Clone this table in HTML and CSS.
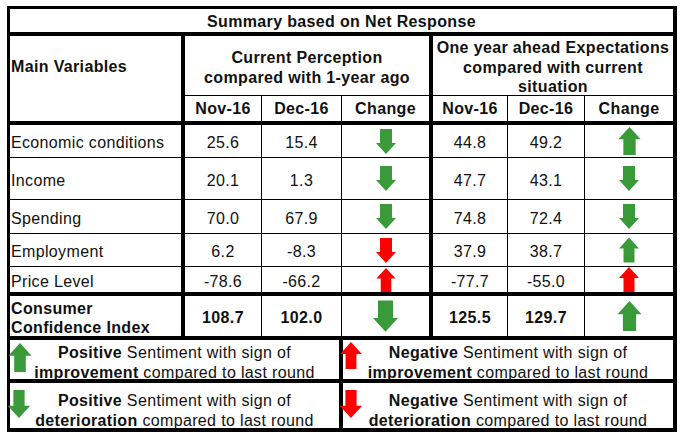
FILE: index.html
```html
<!DOCTYPE html>
<html>
<head>
<meta charset="utf-8">
<link rel="stylesheet" href="styles.css">
</head>
<body>
<div class="frame">
  <div class="table">
    <div class="cell title">Summary based on Net Response</div>
    <div class="sep"></div>
    <div class="cell mainvar">Main Variables</div>
    <div class="cell group tl">Current Perception<br>compared with 1-year ago</div>
    <div class="cell group tl">One year ahead Expectations<br>compared with current<br>situation</div>
    <div class="cell sub tl">Nov-16</div>
    <div class="cell sub">Dec-16</div>
    <div class="cell sub">Change</div>
    <div class="cell sub tl">Nov-16</div>
    <div class="cell sub">Dec-16</div>
    <div class="cell sub">Change</div>
    <div class="sep"></div>

    <div class="cell label">Economic conditions</div>
    <div class="cell tl">25.6</div>
    <div class="cell">15.4</div>
    <div class="cell ac"><svg class="arr g" width="20" height="25" viewBox="0 0 20 25"><path d="M4 0H16V14H20L10 25L0 14H4Z"/></svg></div>
    <div class="cell tl">44.8</div>
    <div class="cell">49.2</div>
    <div class="cell ac"><svg class="arr g" width="23" height="28" viewBox="0 0 20 25"><path d="M10 0L20 11H15.5V25H4.5V11H0Z"/></svg></div>

    <div class="cell label">Income</div>
    <div class="cell tl">20.1</div>
    <div class="cell">1.3</div>
    <div class="cell ac"><svg class="arr g" width="20" height="25" viewBox="0 0 20 25"><path d="M4 0H16V14H20L10 25L0 14H4Z"/></svg></div>
    <div class="cell tl">47.7</div>
    <div class="cell">43.1</div>
    <div class="cell ac"><svg class="arr g" width="20" height="25" viewBox="0 0 20 25"><path d="M4 0H16V14H20L10 25L0 14H4Z"/></svg></div>

    <div class="cell label">Spending</div>
    <div class="cell tl">70.0</div>
    <div class="cell">67.9</div>
    <div class="cell ac"><svg class="arr g" width="20" height="25" viewBox="0 0 20 25"><path d="M4 0H16V14H20L10 25L0 14H4Z"/></svg></div>
    <div class="cell tl">74.8</div>
    <div class="cell">72.4</div>
    <div class="cell ac"><svg class="arr g" width="20" height="25" viewBox="0 0 20 25"><path d="M4 0H16V14H20L10 25L0 14H4Z"/></svg></div>

    <div class="cell label">Employment</div>
    <div class="cell tl">6.2</div>
    <div class="cell">-8.3</div>
    <div class="cell ac"><svg class="arr r" width="20" height="25" viewBox="0 0 20 25"><path d="M4 0H16V14H20L10 25L0 14H4Z"/></svg></div>
    <div class="cell tl">37.9</div>
    <div class="cell">38.7</div>
    <div class="cell ac"><svg class="arr g" width="20" height="26" viewBox="0 0 20 25"><path d="M10 0L20 11H15.5V25H4.5V11H0Z"/></svg></div>

    <div class="cell label">Price Level</div>
    <div class="cell tl">-78.6</div>
    <div class="cell">-66.2</div>
    <div class="cell ac"><svg class="arr r" width="20" height="24" viewBox="0 0 20 25"><path d="M10 0L20 11H15.5V25H4.5V11H0Z"/></svg></div>
    <div class="cell tl">-77.7</div>
    <div class="cell">-55.0</div>
    <div class="cell ac"><svg class="arr r" width="20" height="25" viewBox="0 0 20 25"><path d="M10 0L20 11H15.5V25H4.5V11H0Z"/></svg></div>
    <div class="sep"></div>

    <div class="cell label cci">Consumer<br>Confidence Index</div>
    <div class="cell tl b">108.7</div>
    <div class="cell b">102.0</div>
    <div class="cell ac"><svg class="arr g" width="25" height="32" viewBox="0 0 20 25"><path d="M4 0H16V14H20L10 25L0 14H4Z"/></svg></div>
    <div class="cell tl b">125.5</div>
    <div class="cell b">129.7</div>
    <div class="cell ac"><svg class="arr g" width="25" height="30" viewBox="0 0 20 25"><path d="M10 0L20 11H15.5V25H4.5V11H0Z"/></svg></div>
  </div>

  <div class="legend">
    <div class="lg lg-1">
      <svg class="arr g larr larr-1" width="24" height="29" viewBox="0 0 20 25"><path d="M10 0L20 11H15V25H5V11H0Z"/></svg>
      <b>Positive</b> Sentiment with sign of<br><b>improvement</b> compared to last round
    </div>
    <div class="lg lg-1">
      <svg class="arr r larr larr-1r" width="24" height="27" viewBox="0 0 20 25"><path d="M10 0L20 11H15V25H5V11H0Z"/></svg>
      <b>Negative</b> Sentiment with sign of<br><b>improvement</b> compared to last round
    </div>
    <div class="lg lg-2">
      <svg class="arr g larr larr-2" width="24" height="28" viewBox="0 0 20 25"><path d="M5 0H15V14H20L10 25L0 14H5Z"/></svg>
      <b>Positive</b> Sentiment with sign of<br><b>deterioration</b> compared to last round
    </div>
    <div class="lg lg-2">
      <svg class="arr r larr larr-2r" width="24" height="28" viewBox="0 0 20 25"><path d="M5 0H15V14H20L10 25L0 14H5Z"/></svg>
      <b>Negative</b> Sentiment with sign of<br><b>deterioration</b> compared to last round
    </div>
  </div>
</div>
</body>
</html>
```

FILE: styles.css
```css
* { box-sizing: border-box; }
html, body { margin: 0; padding: 0; background: #fff; }
body {
  font-family: "Liberation Sans", Arial, sans-serif;
  font-size: 16px;
  letter-spacing: 0.35px;
  color: #111;
}
.frame {
  margin: 6px 0 0 7px;
  width: 670px;
  border-style: solid;
  border-color: #000;
  border-width: 3px 4px 4px 3px;
}
.table {
  display: grid;
  grid-template-columns: 171px 79px 79px 87px 77px 76px 88px;
  grid-template-rows: 23px 2px 59px 25px 2px 32px 41px 33px 32px 25px 2px 40px;
  gap: 1px;
  background: #000;
}
.cell {
  background: #fff;
  display: flex;
  align-items: center;
  justify-content: center;
  text-align: center;
  padding-top: 4px;
}
.cell.ac { padding-top: 0; }
.sep { grid-column: 1 / -1; background: #000; }
.title { grid-column: 1 / -1; font-weight: bold; padding-top: 3px; }
.mainvar {
  grid-row: span 2;
  align-items: flex-start;
  justify-content: flex-start;
  padding: 22px 0 0 1px;
  font-weight: bold;
}
.group { grid-column: span 3; font-weight: bold; line-height: 19.5px; }
.tl { border-left: 3px solid #000; }
.sub { font-weight: bold; padding-top: 1px; }
.b { font-weight: bold; }
.label { justify-content: flex-start; text-align: left; padding-left: 1px; }
.cci { font-weight: bold; line-height: 19px; }
.arr { display: block; }
.arr.g { fill: #3a9a3a; }
.arr.r { fill: #ff0000; }
.legend {
  display: grid;
  grid-template-columns: 329px 330px;
  grid-template-rows: 39px 45px;
  gap: 4px;
  background: #000;
  border-top: 4px solid #000;
}
.lg {
  background: #fff;
  position: relative;
  text-align: center;
  line-height: 19.5px;
}
.lg-1 { padding-top: 3px; }
.lg-2 { padding-top: 8px; }
.larr { position: absolute; }
.larr-1 { left: -2px; top: 3px; }
.larr-1r { left: -4px; top: 2px; }
.larr-2 { left: -3px; top: 7px; }
.larr-2r { left: -4px; top: 7px; }
```
